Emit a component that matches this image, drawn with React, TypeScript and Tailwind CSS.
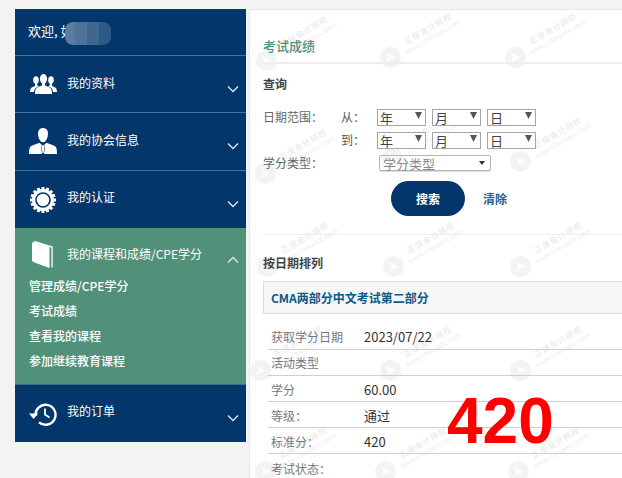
import { ReactNode } from "react";

const FONT = "[font-family:'Noto_Sans_CJK_SC','Liberation_Sans',sans-serif]";

function UsersIcon() {
  return (
    <svg width="27" height="20" viewBox="0 0 27 20" fill="#fff">
      <ellipse cx="13.500" cy="4.800" rx="3.600" ry="4.800" />
      <ellipse cx="6" cy="6" rx="2.800" ry="3.800" />
      <ellipse cx="21" cy="6" rx="2.800" ry="3.800" />
      <path d="M12 9h3v2.500c2.600 1 5 1.800 6 3.200.8 1.100 1 2.900 1 5.300H5c0-2.400.2-4.200 1-5.300 1-1.400 3.400-2.200 6-3.200z" />
      <path d="M5 9h2.200v2.200c.7.500 1.300.8 2 1.100-1.500.6-3 1.300-4 2.300-.7.800-1 1.800-1.200 3.400H0c.1-1.900.4-3 1-3.700.8-1 2.400-1.500 4-2.200z" />
      <path d="M22 9h-2.200v2.200c-.7.500-1.300.8-2 1.100 1.500.6 3 1.300 4 2.300.7.800 1 1.800 1.200 3.400H27c-.1-1.900-.4-3-1-3.700-.8-1-2.400-1.500-4-2.200z" />
    </svg>
  );
}

function ManIcon() {
  return (
    <svg width="28" height="28" viewBox="0 0 28 28" fill="#fff">
      <path d="M14 0c3.200 0 5 2.300 5 5.600 0 3.200-1.200 6-2.400 7.400-.7.800-1.600 1.200-2.600 1.200s-1.900-.4-2.600-1.200C10.200 11.600 9 8.800 9 5.600 9 2.300 10.800 0 14 0z" />
      <path d="M10.600 14.800l2.300 2.200-.9 1.700 1 7.300H0c0-3.500.3-6 1.300-7.200 1.300-1.500 6-2.400 9.300-4z" />
      <path d="M17.400 14.800l-2.300 2.200.9 1.700-1 7.300H28c0-3.500-.3-6-1.300-7.200-1.300-1.500-6-2.400-9.300-4z" />
      <path d="M13 17.300h2l.5 1.300-.9 6.400h-1.200l-.9-6.400z" />
    </svg>
  );
}

function GearIcon() {
  const teeth = Array.from({ length: 16 }, (_, i) => i * 22.5);
  return (
    <svg width="26" height="26" viewBox="0 0 26 26" fill="#fff">
      {teeth.map((a) => (
        <rect key={a} x="11.500" y="0" width="3" height="5" transform={`rotate(${a} 13 13)`} />
      ))}
      <circle cx="13" cy="13" r="11" />
      <circle cx="13" cy="13" r="7" fill="none" stroke="#03366a" strokeWidth="1.600" />
    </svg>
  );
}

function BookIcon() {
  return (
    <svg width="22" height="28" viewBox="0 0 22 28" fill="#fff">
      <path d="M0 3.200C.4 1.400 1.500.4 3.300 0l14.200 5.300v21.700L2.600 21.500C.9 20.900 0 20 0 18.400z" />
      <path d="M3.600 1.500L19.400 6.400v20.200h1.300V5.500L6.200 1z" />
    </svg>
  );
}

function HistoryIcon() {
  return (
    <svg width="28" height="24" viewBox="0 0 28 24" fill="none" stroke="#fff">
      <path d="M6.600 14.500A10 10 0 1 1 10 20.800" strokeWidth="2.400" transform="translate(0 -.5)" />
      <path d="M0 11.500h9.200L4.600 17z" fill="#fff" stroke="none" />
      <path d="M16 6.500v6l4.500 3" strokeWidth="1.800" />
    </svg>
  );
}

function Chevron({ up }: { up?: boolean }) {
  return (
    <svg width="12" height="8" viewBox="0 0 12 8" fill="none" stroke="#dcecf7" strokeWidth="1.300" className={up ? "rotate-180" : ""}>
      <path d="M1 1.500l5 5 5-5" />
    </svg>
  );
}

function MenuRow({
  icon,
  label,
  up,
  className,
  labelClass = "pb-[2px]",
}: {
  icon: ReactNode;
  label: string;
  up?: boolean;
  className?: string;
  labelClass?: string;
}) {
  return (
    <div className={`flex items-center pl-[14px] pr-[7px] ${className ?? ""}`}>
      <div className="flex w-[28px] justify-center">{icon}</div>
      <span className={`ml-[10px] flex-1 text-[12px] text-white ${labelClass}`}>{label}</span>
      <div className="mt-[9px]">
        <Chevron up={up} />
      </div>
    </div>
  );
}

function Sidebar() {
  return (
    <div className="w-[231px] shrink-0 bg-[#03366a]">
      <div className="relative flex h-[47px] items-center border-b border-[#4d7398] pl-[13px] pb-[2px] text-[13px] text-white">
        欢迎, 如
        <div className="absolute left-[50px] top-[13px] flex h-[23px] w-[46px] overflow-hidden rounded-lg">
          <div className="w-[10px] bg-[#5b7c9e]" />
          <div className="w-[12px] bg-[#4f7398]" />
          <div className="w-[12px] bg-[#3f6890]" />
          <div className="w-[12px] bg-[#2b5a88]" />
        </div>
      </div>
      <MenuRow icon={<UsersIcon />} label="我的资料" className="h-[57px] border-b border-[#4d7398]" />
      <MenuRow icon={<ManIcon />} label="我的协会信息" labelClass="pb-[4px]" className="h-[58px] border-b border-[#4d7398]" />
      <MenuRow icon={<GearIcon />} label="我的认证" labelClass="pb-[6px]" className="h-[57px]" />
      <div className="h-[157px] border-b border-[#3f7088] bg-[#51917a]">
        <MenuRow icon={<BookIcon />} label="我的课程和成绩/CPE学分" up className="h-[48px] pt-[6px]" />
        <div className="flex flex-col gap-[6px] pl-[14px] text-[12px] font-medium leading-[19px] text-white">
          <span>管理成绩/CPE学分</span>
          <span>考试成绩</span>
          <span>查看我的课程</span>
          <span>参加继续教育课程</span>
        </div>
      </div>
      <MenuRow icon={<HistoryIcon />} label="我的订单" labelClass="pb-[6px]" className="h-[57px]" />
    </div>
  );
}

const MARKS = [
  "left-[6px] top-[40px]",
  "left-[130px] top-[37px]",
  "left-[255px] top-[37px]",
  "left-[5px] top-[153px]",
  "left-[132px] top-[137px]",
  "left-[260px] top-[141px]",
  "left-[7px] top-[246px]",
  "left-[133px] top-[246px]",
  "left-[260px] top-[246px]",
  "left-[0px] top-[350px]",
  "left-[130px] top-[350px]",
  "left-[260px] top-[350px]",
  "left-[5px] top-[451px]",
  "left-[125px] top-[451px]",
  "left-[258px] top-[451px]",
];

function Watermark({ className }: { className: string }) {
  return (
    <div className={`absolute h-[21px] w-[21px] ${className}`}>
      <svg width="21" height="21" viewBox="0 0 21 21">
        <circle cx="10.500" cy="10.500" r="10.500" fill="#f3f3f3" />
        <path d="M6 6l10 4.500-10 4.500 2.500-4.500z" fill="#fdfdfd" />
      </svg>
      <div className="absolute left-[20px] top-[-24px] flex w-[60px] -rotate-[30deg] flex-col items-center text-[#eeeeee]">
        <span className="whitespace-nowrap text-[8px] font-bold leading-[10px] tracking-[1px]">正保会计网校</span>
        <span className="whitespace-nowrap text-[7px] leading-[8px]">www.chinaacc.com</span>
      </div>
    </div>
  );
}

function DateSelect({ label }: { label: string }) {
  return (
    <div className="flex h-[17px] w-[49px] items-center justify-between border border-[#a6a6a6] bg-white pl-[2px] pr-[3px] text-[13px] leading-none text-[#444]">
      <span>{label}</span>
      <svg width="7" height="7" viewBox="0 0 7 7" className="mb-[3px]">
        <path d="M0 0h7L3.500 7z" fill="#555" />
      </svg>
    </div>
  );
}

function DetailRow({ label, value, line = true, low }: { label: string; value?: string; line?: boolean; low?: boolean }) {
  return (
    <div className={`flex h-[26px] items-center pl-[3px] text-[12px] ${line ? "border-b border-[#cfcfcf]" : ""} ${low ? "pt-[3px]" : ""}`}>
      <span className="w-[93px] text-[#777]">{label}</span>
      <span className="text-[13px] text-[#333]">{value}</span>
    </div>
  );
}

function Main() {
  return (
    <div className="relative ml-[3px] h-[469px] flex-1 overflow-hidden rounded-tl border-l border-t border-[#e8e8e8] bg-white">
      {MARKS.map((m) => (
        <Watermark key={m} className={m} />
      ))}
      <div className="relative pl-[13px] text-[12px]">
        <div className="-mr-px flex h-[54px] items-end border-b-2 border-[#eeeeee] pb-[7px] text-[13px] font-medium text-[#4f8f78]">
          考试成绩
        </div>
        <div className="mt-[11px] text-[12px] font-bold leading-[18px] text-[#444]">查询</div>

        <div className="mt-[15px] flex">
          <span className="w-[78px] text-[#666]">日期范围：</span>
          <div className="flex flex-col gap-[5px]">
            <div className="flex items-center">
              <span className="w-[36px] text-[#555]">从：</span>
              <div className="flex gap-[6px]">
                <DateSelect label="年" />
                <DateSelect label="月" />
                <DateSelect label="日" />
              </div>
            </div>
            <div className="flex items-center">
              <span className="w-[36px] text-[#555]">到：</span>
              <div className="flex gap-[6px]">
                <DateSelect label="年" />
                <DateSelect label="月" />
                <DateSelect label="日" />
              </div>
            </div>
          </div>
        </div>

        <div className="mt-[5px] flex items-center">
          <span className="w-[116px] text-[#666]">学分类型：</span>
          <div className="flex h-[16px] w-[112px] items-center justify-between rounded-[2px] border border-[#b5b5b5] pl-[3px] pr-[5px] text-[13px] text-[#888] shadow-[0_1px_0_#ddd]">
            <span className="leading-none">学分类型</span>
            <svg width="6" height="4" viewBox="0 0 6 4">
              <path d="M0 0h6L3 4z" fill="#333" />
            </svg>
          </div>
        </div>

        <div className="mt-[9px] flex items-center pl-[128px]">
          <div className="flex h-[35px] w-[74px] items-center justify-center rounded-[18px] bg-[#03366a] text-[12px] font-bold text-white">
            搜索
          </div>
          <span className="ml-[18px] text-[12px] font-bold text-[#1f5f99]">清除</span>
        </div>

        <div className="mt-[18px] border-t border-[#eeeeee]" />
        <div className="mt-[19px] text-[12px] font-bold leading-[18px] text-[#444]">按日期排列</div>

        <div className="-mr-px mt-[9px] flex h-[33px] items-center border border-r-0 border-[#dddddd] bg-[#f6f6f6] pl-[7px] text-[12px] font-bold text-[#0a5a8a]">
          CMA两部分中文考试第二部分
        </div>

        <div className="ml-[5px] mt-[10px]">
          <DetailRow label="获取学分日期" value="2023/07/22" />
          <DetailRow label="活动类型" />
          <DetailRow label="学分" value="60.00" low />
          <DetailRow label="等级：" value="通过" low />
          <DetailRow label="标准分：" value="420" low />
          <DetailRow label="考试状态：" line={false} low />
        </div>
      </div>
      <div className="absolute left-[197px] top-[378px] text-[64px] font-bold leading-[66px] text-[#fe0000] [font-family:'Liberation_Sans',sans-serif]">
        420
      </div>
    </div>
  );
}

export default function App() {
  return (
    <div className={`flex h-[478px] w-[622px] items-start overflow-hidden bg-[#f3f3f3] pl-[15px] pt-[9px] ${FONT}`}>
      <Sidebar />
      <Main />
    </div>
  );
}
